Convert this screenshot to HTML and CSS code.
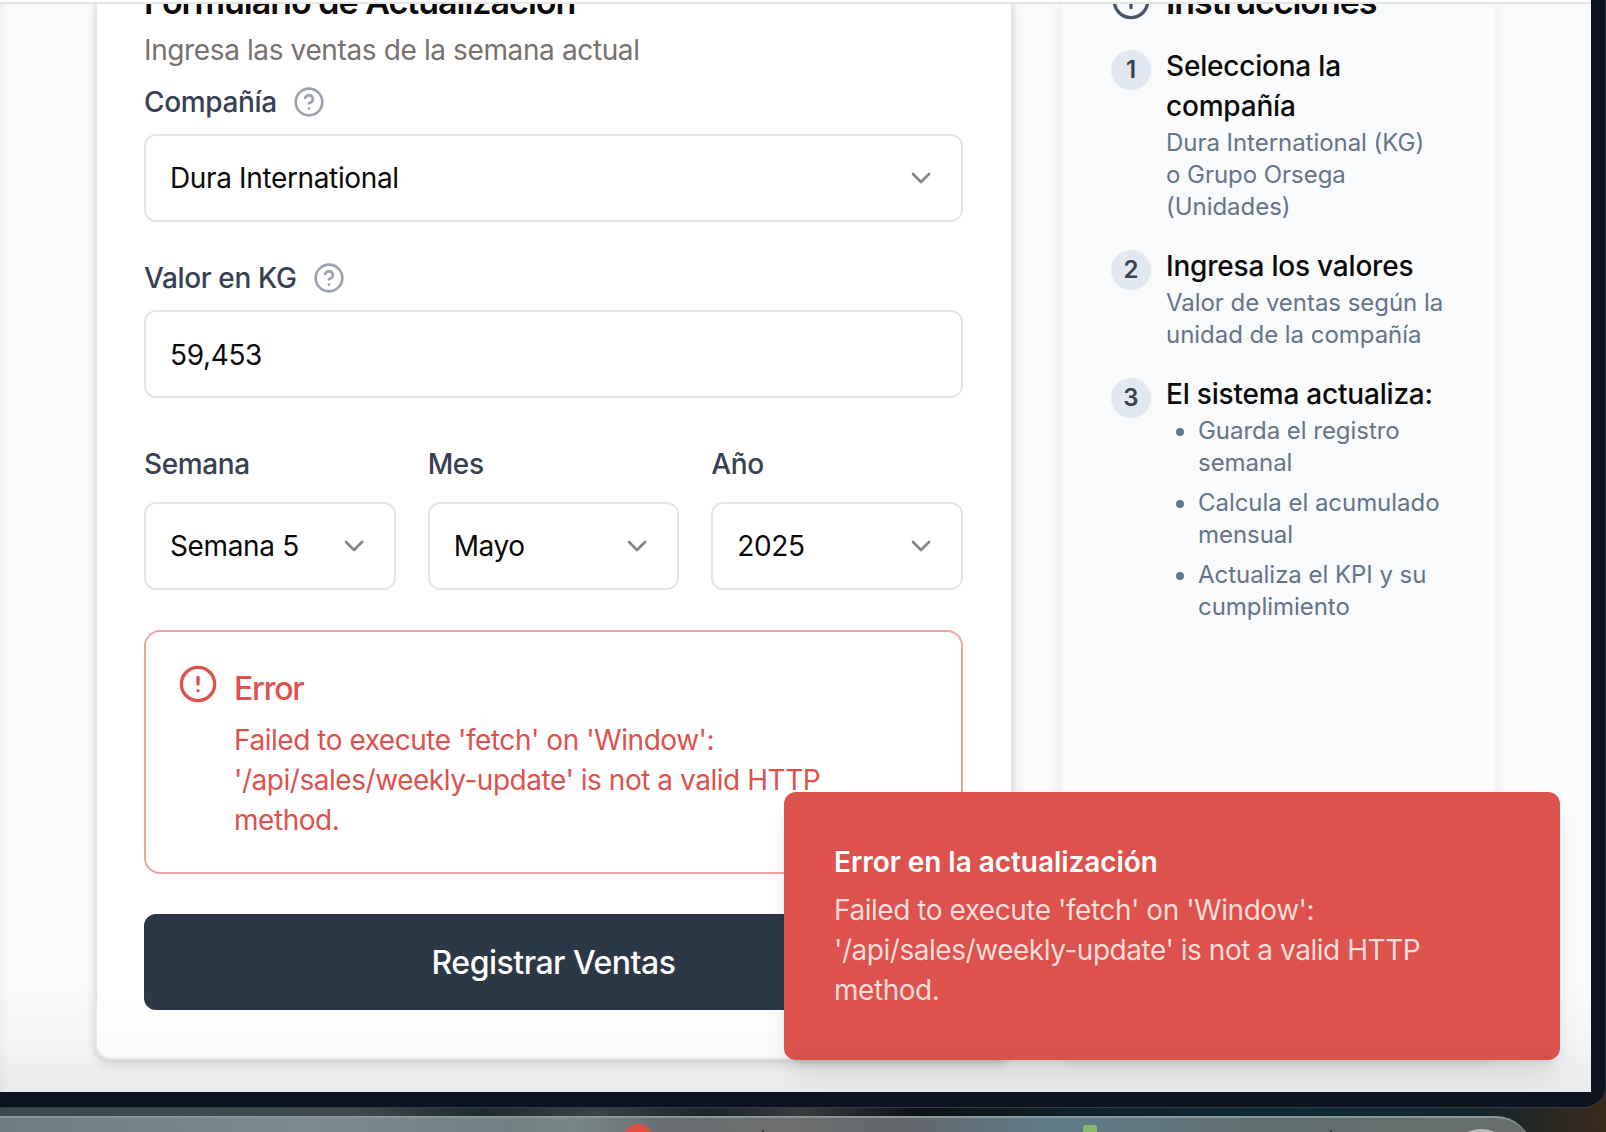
FILE: index.html
```html
<!DOCTYPE html>
<html lang="es">
<head>
<meta charset="utf-8">
<title>Actualización de ventas</title>
<link rel="stylesheet" href="styles.css">
</head>
<body>
<svg class="defs" width="0" height="0">
  <symbol id="chevron" viewBox="0 0 24 24"><path d="m6 9 6 6 6-6"/></symbol>
  <symbol id="help" viewBox="0 0 24 24"><circle cx="12" cy="12" r="10"/><path d="M9.09 9a3 3 0 0 1 5.83 1c0 2-3 3-3 3M12 17h.01"/></symbol>
  <symbol id="alert" viewBox="0 0 24 24"><circle cx="12" cy="12" r="10"/><path d="M12 8v4M12 16h.01"/></symbol>
  <symbol id="info" viewBox="0 0 24 24"><circle cx="12" cy="12" r="10"/><path d="M12 16v-4M12 8h.01M10.5 12h3"/></symbol>
</svg>
<div class="window">
  <div class="topbar"></div>
  <main class="page">
    <section class="card form-card">
      <h2 class="form-title">Formulario de Actualización</h2>
      <p class="subtitle">Ingresa las ventas de la semana actual</p>
      <div class="label"><span>Compañía</span><svg class="help"><use href="#help"/></svg></div>
      <div class="control"><span>Dura International</span><svg class="chevron"><use href="#chevron"/></svg></div>
      <div class="label second"><span>Valor en KG</span><svg class="help"><use href="#help"/></svg></div>
      <div class="control amount"><span>59,453</span></div>
      <div class="period">
        <div class="field"><div class="label"><span>Semana</span></div><div class="control"><span>Semana 5</span><svg class="chevron"><use href="#chevron"/></svg></div></div>
        <div class="field"><div class="label"><span>Mes</span></div><div class="control"><span>Mayo</span><svg class="chevron"><use href="#chevron"/></svg></div></div>
        <div class="field"><div class="label"><span>Año</span></div><div class="control"><span>2025</span><svg class="chevron"><use href="#chevron"/></svg></div></div>
      </div>
      <div class="alert">
        <svg class="alert-icon"><use href="#alert"/></svg>
        <div>
          <h5 class="alert-title">Error</h5>
          <p class="message">Failed to execute 'fetch' on 'Window':<br>'/api/sales/weekly-update' is not a valid HTTP<br>method.</p>
        </div>
      </div>
      <div class="submit"><span>Registrar Ventas</span></div>
    </section>
    <aside class="card help-card">
      <h2 class="help-title"><svg class="info"><use href="#info"/></svg><span>Instrucciones</span></h2>
      <div class="step"><b class="badge">1</b><div><h3>Selecciona la<br>compañía</h3><p>Dura International (KG)<br>o Grupo Orsega<br>(Unidades)</p></div></div>
      <div class="step"><b class="badge">2</b><div><h3>Ingresa los valores</h3><p>Valor de ventas según la<br>unidad de la compañía</p></div></div>
      <div class="step"><b class="badge">3</b><div><h3>El sistema actualiza:</h3>
        <ul><li>Guarda el registro<br>semanal</li><li>Calcula el acumulado<br>mensual</li><li>Actualiza el KPI y su<br>cumplimiento</li></ul></div></div>
    </aside>
  </main>
  <div class="toast">
    <h4>Error en la actualización</h4>
    <p class="message">Failed to execute 'fetch' on 'Window':<br>'/api/sales/weekly-update' is not a valid HTTP<br>method.</p>
  </div>
</div>
<div class="dock">
  <i class="app app-red"></i><i class="app app-green"></i><i class="app app-gray"></i>
  <i class="tick tick-a"></i><i class="tick tick-b"></i>
</div>
</body>
</html>
```
FILE: styles.css
```css
* { box-sizing: border-box; }
body {
  margin: 0; width: 1606px; height: 1132px; overflow: hidden; position: relative;
  font-family: Inter, "Liberation Sans", sans-serif; font-size: 28px; line-height: 40px; color: #0c0a09;
  background: linear-gradient(90deg, #3c4a4e 0, #414b4e 22%, #1f2a2d 30%, #3a4244 37%, #1c2528 44%, #3a3c3b 50%, #0d1214 57%, #10232c 68%, #0e2b35 80%, #14262b 92%, #3a2a1c 100%);
}
h2, h3, h4, h5, p, ul { margin: 0; padding: 0; font-weight: 400; }
svg { display: block; fill: none; stroke: currentColor; stroke-width: 2; stroke-linecap: round; stroke-linejoin: round; flex: none; }
.defs { position: absolute; }

.window {
  position: relative; width: 1606px; height: 1108px; overflow: hidden;
  background: #0e1320; border-bottom: 1px solid #323a46; border-right: 1px solid #232b37; border-radius: 0 0 22px 0;
}
.topbar { position: absolute; z-index: 2; top: 0; left: 0; width: 1591px; height: 4px; background: #fff; border-bottom: 2px solid #e5e5e5; }
.page {
  width: 1591px; height: 1092px; overflow: hidden; padding-left: 95px;
  display: flex; gap: 47px; align-items: flex-start;
  background: linear-gradient(90deg, rgba(0,0,0,.035), transparent 8px), linear-gradient(#f8fafc 0, #f8fafc 980px, #f3f4f6 1045px, #e9eaeb 1092px);
}
.card { height: 1060px; border: 2px solid #e7e5e4; border-top: 0; border-radius: 0 0 16px 16px; box-shadow: 0 4px 12px rgba(0,0,0,.12), 0 2px 4px rgba(0,0,0,.06); }
.form-card { width: 918px; padding: 0 48px 0 47px; background: linear-gradient(#fff 990px, #fafafa); }
.help-card { width: 437px; padding: 0 46px 0 49px; background: #f8fafc; border-color: #f1f5f9; box-shadow: 0 4px 12px rgba(0,0,0,.08); }

.form-title { height: 31px; line-height: 40px; margin-top: -18px; font-size: 34px; font-weight: 600; letter-spacing: -1px; white-space: nowrap; }
.subtitle { color: #78716c; margin-top: 17px; letter-spacing: -.38px; white-space: nowrap; }
.label { display: flex; align-items: center; gap: 16px; height: 40px; color: #374151; font-weight: 500; letter-spacing: -.36px; white-space: nowrap; }
.form-card > .label { margin: 12px 0 12px; }
.form-card > .label.second { margin-top: 36px; }
.help { width: 32px; height: 32px; color: #9ca3af; }
.control { height: 88px; border: 2px solid #e5e5e5; border-radius: 12px; background: #fff; padding: 0 24px; letter-spacing: -.36px; display: flex; align-items: center; justify-content: space-between; white-space: nowrap; }
.control.amount { padding-top: 2px; }
.chevron { width: 32px; height: 32px; color: #858484; }
.period { display: grid; grid-template-columns: repeat(3, 1fr); gap: 32px; margin-top: 46px; }
.period .label { margin-bottom: 18px; }
.alert { margin-top: 40px; height: 244px; border: 2px solid #f0a5a2; border-radius: 16px; padding: 32px; display: flex; gap: 16px; color: #dd524c; }
.alert-icon { width: 40px; height: 40px; }
.alert-title { font-size: 32px; line-height: 32px; font-weight: 500; letter-spacing: -1.2px; margin: 9px 0 15px; }
.message { letter-spacing: -.46px; white-space: nowrap; }
.submit { margin-top: 40px; height: 96px; padding-top: 2px; border-radius: 12px; background: #2d3846; color: #fff; font-size: 32px; font-weight: 500; letter-spacing: -.5px; display: flex; align-items: center; justify-content: center; }

.help-title { height: 64px; margin-top: -18px; display: flex; gap: 15px; font-size: 34px; font-weight: 600; letter-spacing: -1.05px; }
.info { width: 40px; height: 40px; color: #475569; margin-top: -1px; }
.step { display: flex; gap: 15px; margin-bottom: 23px; white-space: nowrap; }
.badge { width: 40px; height: 40px; margin-top: 4px; border-radius: 50%; background: #e2e8f0; color: #374151; font-size: 24px; font-weight: 600; text-align: center; flex: none; }
h3 { font-size: 28px; font-weight: 500; letter-spacing: -.2px; margin-bottom: 1px; }
.step p, .step ul { font-size: 24px; line-height: 32px; color: #64748b; letter-spacing: -.04px; }
.step ul { list-style: none; padding-left: 32px; }
.step li { position: relative; margin-bottom: 8px; }
.step li::before { content: ""; position: absolute; left: -22px; top: 13px; width: 8px; height: 8px; border-radius: 50%; background: #64748b; }

.toast {
  position: absolute; left: 784px; top: 792px; width: 776px; height: 268px; padding: 50px 50px 0; border-radius: 12px;
  background: linear-gradient(#dd524c 245px, #d9514b); color: #fff; box-shadow: 0 20px 30px -6px rgba(0,0,0,.1), 0 8px 12px -8px rgba(0,0,0,.15);
}
.toast h4 { font-weight: 600; letter-spacing: -.05px; margin-bottom: 8px; white-space: nowrap; }
.toast .message { color: #f9dcdb; }

.dock {
  position: absolute; left: -40px; top: 1116px; width: 1572px; height: 60px; border-top: 2px solid #88979b; border-radius: 0 36px 0 0; overflow: hidden;
  background: linear-gradient(90deg, #6f7c82 40px, #7d8b91 22%, #728083 35%, #788688 39%, #666c70 45%, #6e706e 52%, #62666b 60%, #5f7a88 69%, #5f7983 74%, #606e70 82%, #676e6a 100%);
}
.app { position: absolute; }
.app-red { left: 663px; top: 6px; width: 30px; height: 30px; border-radius: 50%; background: #df4f40; }
.app-green { left: 1123px; top: 7px; width: 14px; height: 30px; background: #87b96c; border-radius: 2px; }
.app-gray { left: 1490px; top: 11px; width: 62px; height: 62px; border-radius: 50%; background: #b9baba; }
.tick { position: absolute; top: 12px; width: 2px; height: 10px; background: #33393b; }
.tick-a { left: 802px; }
.tick-b { left: 1370px; }
```
